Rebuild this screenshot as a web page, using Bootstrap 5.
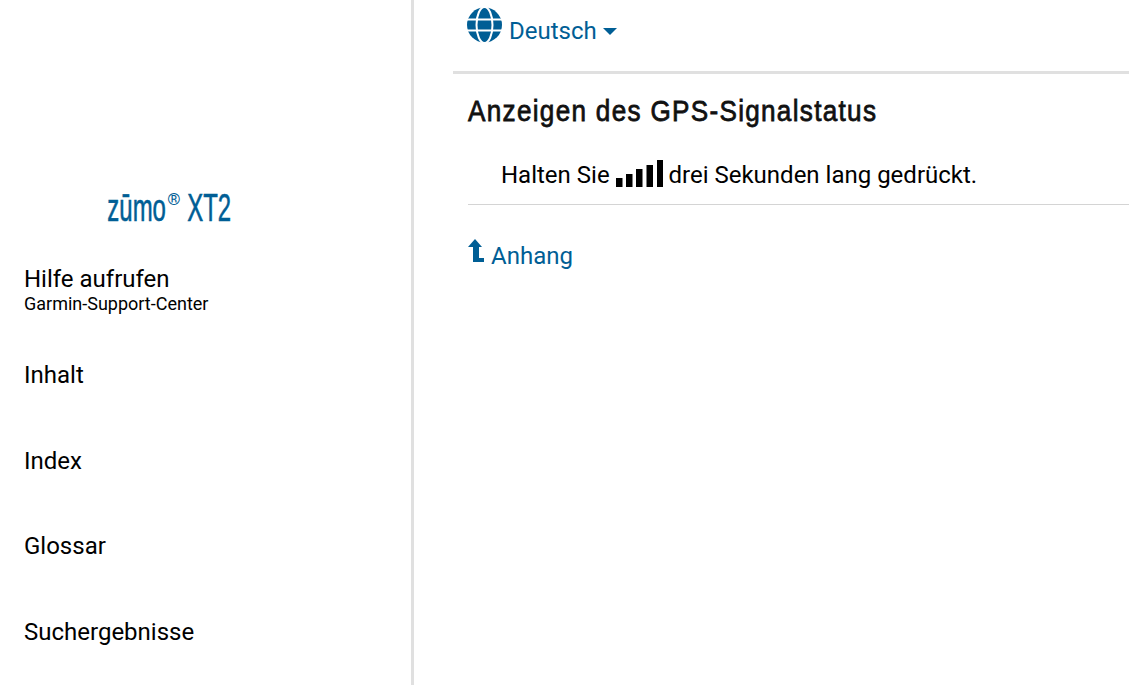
<!DOCTYPE html>
<html lang="de">
<head>
<meta charset="utf-8">
<title>Anzeigen des GPS-Signalstatus</title>
<link rel="stylesheet" href="https://cdn.jsdelivr.net/npm/bootstrap@5.3.0/dist/css/bootstrap.min.css">
<style>
html,body{height:685px;overflow:hidden;background:#fff}
body{font-family:Roboto,"Liberation Sans",sans-serif;font-size:24px;color:#000}
.page-wrap{height:685px}
.side-pane{width:414px;flex:none;border-right:3px solid #e0e0e0;padding:184px 0 0 24px}
.brand-name{width:291px;text-align:center;height:48px;white-space:nowrap}
.brand-text{display:inline-block;font-family:"Liberation Sans",sans-serif;color:#005e95;font-size:38px;line-height:48px;transform:scaleX(.63);-webkit-text-stroke:.6px #005e95}
.brand-text sup{display:inline-block;font-size:17px;top:-.95em;font-family:Roboto,sans-serif;vertical-align:baseline;position:relative;transform:scaleX(1.58);margin:0 4px 0 6px;-webkit-text-stroke:0}
.side-item{display:block;color:#000;text-decoration:none;line-height:28px}
.side-item small{display:block;font-size:18px;line-height:22px}
.item-help{margin-top:33px;height:68px}
.item-toc{margin-top:28px}
.item-next{margin-top:57.5px}
.main-pane{min-width:0;flex:1;padding-left:39px}
.lang-bar{height:74px;border-bottom:3px solid #e0e0e0;padding:7px 0 0 14px;color:#005e95}
.lang-toggle{color:#005e95;font-size:24px;line-height:48px;text-decoration:none;margin-left:6px}
.lang-toggle::after{display:inline-block;content:"";vertical-align:4px;margin-left:6px;border-top:7px solid;border-left:7px solid transparent;border-right:7px solid transparent}
.topic{padding-left:15px}
.topic-title{font-family:"Liberation Sans",sans-serif;font-size:30px;font-weight:400;line-height:40px;letter-spacing:1.5px;margin:17px 0 0;color:#111;-webkit-text-stroke:.8px #111;white-space:nowrap;transform:scaleX(.87);transform-origin:left center}
.topic-step{margin:28px 0 0;padding:0 0 13px 33px;line-height:32px;border-bottom:1px solid #d4d4d4}
.sig-icon{vertical-align:-4px}
.up-link{display:flex;align-items:flex-start;margin-top:33px;color:#005e95;text-decoration:none;line-height:36px}
.up-link svg{margin:0 7px 0 0;flex:none}
</style>
</head>
<body>
<div class="d-flex page-wrap">
  <nav class="side-pane">
    <div class="brand-name"><span class="brand-text">zūmo<sup>®</sup> XT2</span></div>
    <a href="#" class="side-item item-help">Hilfe aufrufen<small>Garmin-Support-Center</small></a>
    <a href="#" class="side-item item-toc">Inhalt</a>
    <a href="#" class="side-item item-next">Index</a>
    <a href="#" class="side-item item-next">Glossar</a>
    <a href="#" class="side-item item-next">Suchergebnisse</a>
  </nav>
  <main class="main-pane">
    <div class="lang-bar d-flex align-items-start">
      <svg width="36" height="36" viewBox="0 0 36 36" class="flex-none" aria-hidden="true">
        <circle cx="17.5" cy="18" r="17.5" fill="#005e95"/>
        <g fill="none" stroke="#fff" stroke-width="2">
          <ellipse cx="17.5" cy="18" rx="8" ry="18"/>
          <path d="M0 12.5H36M0 23.5H36"/>
        </g>
      </svg>
      <a href="#" class="lang-toggle">Deutsch</a>
    </div>
    <article class="topic">
      <h1 class="topic-title">Anzeigen des GPS-Signalstatus</h1>
      <p class="topic-step">Halten Sie <svg class="sig-icon" width="47" height="27" viewBox="0 0 47 27" aria-hidden="true"><path fill="#000" d="M0 18H6.500V27H0ZM10 14H16.500V27H10ZM20 9H26.500V27H20ZM30.500 5H37V27H30.500ZM41 0H47V27H41Z"/></svg> drei Sekunden lang gedrückt.</p>
      <a href="#" class="up-link">
        <svg width="16" height="26" viewBox="0 0 16 26" aria-hidden="true"><path fill="#005e95" d="M7 1L14 9H11V20H16V24H5V9H0Z"/></svg>
        <span>Anhang</span>
      </a>
    </article>
  </main>
</div>
<script src="https://cdn.jsdelivr.net/npm/bootstrap@5.3.0/dist/js/bootstrap.bundle.min.js"></script>
</body>
</html>
